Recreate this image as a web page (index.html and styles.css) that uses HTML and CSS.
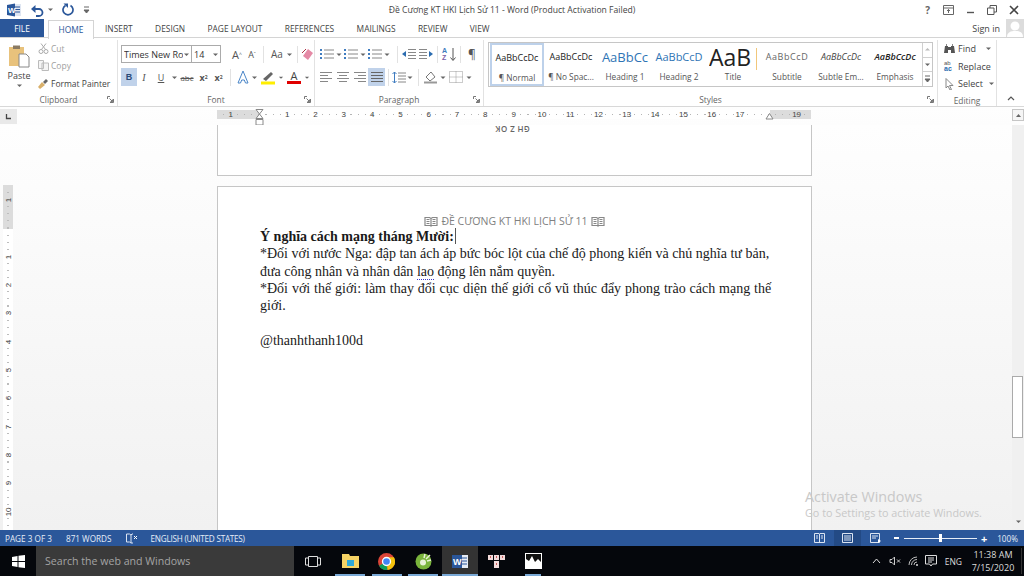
FILE: index.html
```html
<!DOCTYPE html>
<html lang="vi">
<head>
<meta charset="utf-8">
<title>Đề Cương KT HKI Lịch Sử 11 - Word</title>
<link rel="stylesheet" href="styles.css">
</head>
<body>
<svg class="defs" width="0" height="0">
  <symbol id="launch" viewBox="0 0 7 7"><path d="M.5 3V.5H3M6.5 3v3.500H3M2.500 2.500l3 3M5.500 3.500v2h-2" fill="none" stroke="#777"/></symbol>
  <symbol id="caret" viewBox="0 0 7 7"><path d="M1 2.500h5L3.500 5z" fill="#666"/></symbol>
  <symbol id="list" viewBox="0 0 14 12"><path d="M0 1h2v2H0zM0 5h2v2H0zM0 9h2v2H0z" fill="#3f7cc0"/><path d="M4 2h10M4 6h10M4 10h10" stroke="#888"/></symbol>
  <symbol id="left" viewBox="0 0 14 12"><path d="M1 1.500h12M1 4.500h8M1 7.500h12M1 10.500h8" stroke="#888"/></symbol>
  <symbol id="center" viewBox="0 0 14 12"><path d="M1 1.500h12M3 4.500h8M1 7.500h12M3 10.500h8" stroke="#888"/></symbol>
  <symbol id="right" viewBox="0 0 14 12"><path d="M1 1.500h12M5 4.500h8M1 7.500h12M5 10.500h8" stroke="#888"/></symbol>
  <symbol id="justify" viewBox="0 0 14 12"><path d="M1 1.500h12M1 4.500h12M1 7.500h12M1 10.500h12" stroke="#666"/></symbol>
  <symbol id="book" viewBox="0 0 14 11"><path d="M1 1.500h4.500L7 2.500l1.500-1H13v8H8L7 10 6 9.500H1zM7 2.500v7M2.500 3.500h3M2.500 5.500h3M2.500 7.500h3M8.500 3.500h3M8.500 5.500h3M8.500 7.500h3" fill="none" stroke="#888" stroke-width="1.200"/></symbol>
</svg>

<header class="titlebar">
  <div class="qat">
    <svg class="qword" width="14" height="14" viewBox="0 0 14 14"><rect x="5" y="1" width="9" height="12" fill="#dfe6f2"/><path d="M8 4h5M8 6.500h5M8 9h5" stroke="#2b579a"/><path d="M0 2l8-1.500v13L0 12z" fill="#2b579a"/><text x="1" y="9.500" class="qw">W</text></svg>
    <svg class="qundo" width="16" height="14" viewBox="0 0 16 14"><path d="M3 6h6a3.500 3.500 0 0 1 0 7H6" fill="none" stroke="#2b579a" stroke-width="1.800"/><path d="M1 6l4.500-4v8z" fill="#2b579a"/></svg>
    <svg class="qcaret" width="7" height="7"><use href="#caret"/></svg>
    <svg class="qredo" width="12" height="14" viewBox="0 0 12 14"><path d="M3.500 2.500a5 5 0 1 0 5 0" fill="none" stroke="#2b579a" stroke-width="1.700"/><path d="M1.500 0.500h4.500v4.500z" fill="#2b579a"/></svg>
    <svg class="qmore" width="7" height="8" viewBox="0 0 7 8"><path d="M1 1h5M1 4h5L3.500 7z" stroke="#666" fill="#666"/></svg>
  </div>
  <div class="doc-title">Đề Cương KT HKI Lịch Sử 11 - Word (Product Activation Failed)</div>
  <div class="winbtns">
    <span class="help">?</span>
    <svg width="11" height="10" viewBox="0 0 11 10"><path d="M.5.500h10v9H.5zM.5 3h10M5.500 8V4.500M4 6l1.500-1.500L7 6" fill="none" stroke="#666"/></svg>
    <svg width="9" height="10" viewBox="0 0 9 10"><path d="M1 7.500h7" stroke="#555" stroke-width="1.400"/></svg>
    <svg width="10" height="10" viewBox="0 0 10 10"><path d="M.5 3h6.500v6.500H.5zM3 3V.5h6.500V7H7" fill="none" stroke="#555"/></svg>
    <svg width="10" height="10" viewBox="0 0 10 10"><path d="M1 1l8 8M9 1l-8 8" stroke="#444" stroke-width="1.600"/></svg>
  </div>
</header>

<nav class="tabs">
  <span class="tab-file">FILE</span>
  <span class="tab-home">HOME</span>
  <span class="tab">INSERT</span>
  <span class="tab">DESIGN</span>
  <span class="tab">PAGE LAYOUT</span>
  <span class="tab">REFERENCES</span>
  <span class="tab">MAILINGS</span>
  <span class="tab">REVIEW</span>
  <span class="tab">VIEW</span>
  <span class="signin">Sign in</span>
  <span class="avatar"><svg width="18" height="18" viewBox="0 0 18 18"><rect width="18" height="18" fill="#dcdcdc"/><circle cx="9" cy="7" r="4.500" fill="#fff"/><path d="M1 18c0-5 4-6 8-6s8 1 8 6z" fill="#fff"/></svg></span>
</nav>

<section class="ribbon">
  <div class="group g-clip">
    <div class="clip-body">
      <div class="paste">
        <svg width="22" height="24" viewBox="0 0 22 24"><path d="M1 3h15v19H1z" fill="#e8c27c"/><path d="M5 1.500h7v3.500H5z" fill="#8a7a62"/><path d="M11 10h7l3 3v10H11z" fill="#fff" stroke="#888"/></svg>
        <span class="paste-label">Paste</span>
        <svg width="7" height="7"><use href="#caret"/></svg>
      </div>
      <div class="clip-list">
        <div class="clip-row muted"><svg width="11" height="11" viewBox="0 0 11 11"><circle cx="3" cy="8.500" r="2" fill="none" stroke="#aaa"/><circle cx="8" cy="8.500" r="2" fill="none" stroke="#aaa"/><path d="M3.500 6.500L8 .5M7.500 6.500L3 .5" stroke="#aaa"/></svg>Cut</div>
        <div class="clip-row muted"><svg width="11" height="11" viewBox="0 0 11 11"><path d="M.5.500h5v8h-5zM4 3h6.500v7.500H4z" fill="#f4f4f4" stroke="#bbb"/></svg>Copy</div>
        <div class="clip-row"><svg width="11" height="11" viewBox="0 0 11 11"><path d="M5 4l3-3 2 2-3 3z" fill="#666"/><path d="M0 9l4-5 3 3-5 4z" fill="#d9b06a"/></svg>Format Painter</div>
      </div>
    </div>
    <div class="glabel">Clipboard<svg class="launch" width="7" height="7"><use href="#launch"/></svg></div>
  </div>

  <div class="group g-font">
    <div class="rows">
      <div class="row row1">
        <span class="fontbox fname"><span class="fname-text">Times New Ro</span><svg width="7" height="7"><use href="#caret"/></svg></span>
        <span class="fontbox fsize">14<svg width="7" height="7"><use href="#caret"/></svg></span>
        <span class="b w16 growA">A<sup>^</sup></span>
        <span class="b w14 shrinkA">A<sup>ˇ</sup></span>
        <span class="vsep"></span>
        <span class="b w18 aa">Aa</span><svg class="w7" width="7" height="7"><use href="#caret"/></svg>
        <span class="vsep"></span>
        <svg class="eraser" width="13" height="13" viewBox="0 0 13 13"><path d="M7 1l5 4-5 7-5-4z" fill="#e58aa6"/><path d="M1 5l4-4" stroke="#a34" /></svg>
      </div>
      <div class="row row2">
        <span class="b w16 act bold">B</span>
        <span class="b w14 ital">I</span>
        <span class="b w20 under">U</span><svg class="w7" width="7" height="7"><use href="#caret"/></svg>
        <span class="b w18 strike">abc</span>
        <span class="b w15 sc">x<sub>2</sub></span>
        <span class="b w15 sc">x<sup>2</sup></span>
        <span class="vsep"></span>
        <svg class="w16" width="16" height="15" viewBox="0 0 16 15"><path d="M8 1l5 12h-2.500L9.300 10H6.700L5.500 13H3z" fill="#fff" stroke="#4a86c8"/></svg><svg class="w7" width="7" height="7"><use href="#caret"/></svg>
        <svg class="w20" width="20" height="15" viewBox="0 0 20 15"><path d="M5 9l8-7 2 2-7 7z" fill="#666"/><rect x="3" y="11.500" width="14" height="3" fill="#ffee00"/></svg><svg class="w6" width="6" height="7"><use href="#caret"/></svg>
        <span class="b w20 fontcolor">A</span><svg class="w6" width="6" height="7"><use href="#caret"/></svg>
      </div>
    </div>
    <div class="glabel">Font<svg class="launch" width="7" height="7"><use href="#launch"/></svg></div>
  </div>

  <div class="group g-para">
    <div class="rows para-rows">
      <div class="row para1">
        <svg width="14" height="12"><use href="#list"/></svg><svg class="w10" width="7" height="7"><use href="#caret"/></svg>
        <svg width="14" height="12"><use href="#list"/></svg><svg class="w10" width="7" height="7"><use href="#caret"/></svg>
        <svg width="14" height="12"><use href="#list"/></svg><svg class="w10" width="7" height="7"><use href="#caret"/></svg>
        <span class="vsep sep-a"></span>
        <svg width="14" height="12" viewBox="0 0 14 12"><path d="M6 1.500h8M6 4.500h8M6 7.500h8M6 10.500h8" stroke="#888"/><path d="M0 6l4-3v6z" fill="#2b6cb0"/></svg>
        <svg class="ml3" width="14" height="12" viewBox="0 0 14 12"><path d="M0 1.500h8M0 4.500h8M0 7.500h8M0 10.500h8" stroke="#888"/><path d="M14 6l-4-3v6z" fill="#2b6cb0"/></svg>
        <span class="vsep"></span>
        <span class="sort"><span class="az"><span>A</span><span class="zz">Z</span></span><svg width="6" height="15" viewBox="0 0 6 15"><path d="M3 1v12M.5 10.500L3 13.500l2.500-3" fill="none" stroke="#555"/></svg></span>
        <span class="vsep"></span>
        <span class="b w14 pil">¶</span>
      </div>
      <div class="row para2">
        <svg class="al" width="14" height="12"><use href="#left"/></svg>
        <svg class="al" width="14" height="12"><use href="#center"/></svg>
        <svg class="al" width="14" height="12"><use href="#right"/></svg>
        <span class="just"><svg width="14" height="12"><use href="#justify"/></svg></span>
        <span class="vsep sep-b"></span>
        <svg width="14" height="13" viewBox="0 0 14 13"><path d="M2.500 1v11M.5 3l2-2 2 2M.5 10l2 2 2-2" fill="none" stroke="#3f7cc0"/><path d="M6 2h8M6 5h8M6 8h8M6 11h8" stroke="#888"/></svg><svg class="w8" width="7" height="7"><use href="#caret"/></svg>
        <span class="vsep"></span>
        <svg class="w16" width="16" height="14" viewBox="0 0 16 14"><path d="M3 7l5-5 4 5-5 4z" fill="#fff" stroke="#777"/><path d="M1 12.500h13" stroke="#999" stroke-width="2"/></svg><svg class="w8" width="7" height="7"><use href="#caret"/></svg>
        <svg class="ml2" width="14" height="12" viewBox="0 0 14 12"><path d="M.5.500h13v11H.5zM7 .5v11M.5 6h13" fill="none" stroke="#999" stroke-dasharray="1 1"/></svg><svg class="ml2 w8" width="7" height="7"><use href="#caret"/></svg>
      </div>
    </div>
    <div class="glabel">Paragraph<svg class="launch" width="7" height="7"><use href="#launch"/></svg></div>
  </div>

  <div class="group g-styles">
    <div class="gallery">
      <div class="style selected"><span class="prev pv-body">AaBbCcDc</span><span class="sname">¶ Normal</span></div>
      <div class="style"><span class="prev pv-body">AaBbCcDc</span><span class="sname">¶ No Spac...</span></div>
      <div class="style"><span class="prev pv-h1">AaBbCc</span><span class="sname">Heading 1</span></div>
      <div class="style"><span class="prev pv-h2">AaBbCcD</span><span class="sname">Heading 2</span></div>
      <div class="style"><span class="prev pv-title">AaB|</span><span class="sname">Title</span></div>
      <div class="style"><span class="prev pv-sub">AaBbCcD</span><span class="sname">Subtitle</span></div>
      <div class="style"><span class="prev pv-em">AaBbCcDc</span><span class="sname">Subtle Em...</span></div>
      <div class="style"><span class="prev pv-emb">AaBbCcDc</span><span class="sname">Emphasis</span></div>
      <div class="gscroll">
        <span><svg width="7" height="7" viewBox="0 0 7 7"><path d="M1 4.500h5L3.500 2z" fill="#bbb"/></svg></span>
        <span><svg width="7" height="7"><use href="#caret"/></svg></span>
        <span><svg width="7" height="8" viewBox="0 0 7 8"><path d="M1 1h5M1 4h5L3.500 7z" stroke="#666" fill="#666"/></svg></span>
      </div>
    </div>
    <div class="glabel">Styles<svg class="launch" width="7" height="7"><use href="#launch"/></svg></div>
  </div>

  <div class="group g-edit">
    <div class="clip-list edit-list">
      <div class="clip-row"><svg width="11" height="11" viewBox="0 0 11 11"><path d="M1 3h3v7H0zM7 3h3l1 7H7zM4 4h3v3H4z" fill="#555"/><path d="M2 1h1v2H2zM8 1h1v2H8z" fill="#888"/></svg>Find<svg class="ml6" width="7" height="7"><use href="#caret"/></svg></div>
      <div class="clip-row"><span class="rp"><span>ab</span><span class="rp2">ac</span></span>Replace</div>
      <div class="clip-row"><svg width="11" height="12" viewBox="0 0 11 12"><path d="M2 .5l7 7H5.500l2 4-1.500.5-2-4L2 10z" fill="#fff" stroke="#888"/></svg>Select<svg class="ml2" width="7" height="7"><use href="#caret"/></svg></div>
    </div>
    <div class="glabel">Editing</div>
  </div>
  <div class="collapse"><svg width="8" height="6" viewBox="0 0 8 6"><path d="M1 5l3-3 3 3" fill="none" stroke="#555" stroke-width="1.200"/></svg></div>
</section>

<div class="ruler-row">
  <div class="tabstop"><svg width="7" height="7" viewBox="0 0 7 7"><path d="M1.500 1v4.500H6" fill="none" stroke="#444" stroke-width="1.300"/></svg></div>
  <div class="hruler">
    <span>1</span><span></span><span>1</span><span>2</span><span>3</span><span>4</span><span>5</span><span>6</span><span>7</span><span>8</span><span>9</span><span>10</span><span>11</span><span>12</span><span>13</span><span>14</span><span>15</span><span>16</span><span>17</span><span></span><span>19</span>
    <svg class="indent-l" width="9" height="17" viewBox="0 0 9 17"><path d="M1 .5h7L4.500 5zM4.500 5L8 9.500H1z" fill="#fff" stroke="#888"/><path d="M1 10.500h7v5.500H1z" fill="#fff" stroke="#888"/></svg>
    <svg class="indent-r" width="9" height="7" viewBox="0 0 9 7"><path d="M4.500 .5L8 6H1z" fill="#fff" stroke="#888"/></svg>
  </div>
  <div class="up-btn"><svg width="7" height="7" viewBox="0 0 7 7"><path d="M1 5h5L3.500 2z" fill="#666"/></svg></div>
</div>

<main class="docarea">
  <div class="vgutter">
    <div class="vruler">
      <span>1</span><span></span><span>1</span><span>2</span><span>3</span><span>4</span><span>5</span><span>6</span><span>7</span><span>8</span><span>9</span><span>10</span>
    </div>
  </div>
  <div class="pages">
    <div class="page-stub"><span class="flipped">GH Z OK</span></div>
    <article class="page">
      <div class="page-head"><svg width="14" height="11"><use href="#book"/></svg> ĐỀ CƯƠNG KT HKI LỊCH SỬ 11 <svg width="14" height="11"><use href="#book"/></svg></div>
      <div class="body-text">
        <p><strong>Ý nghĩa cách mạng tháng Mười:</strong><span class="cursor"></span></p>
        <p>*Đối với nước Nga: đập tan ách áp bức bóc lột của chế độ phong kiến và chủ nghĩa tư bản, đưa công nhân và nhân dân <span class="wavy">lao</span> động lên nắm quyền.</p>
        <p class="wide">*Đối với thế giới: làm thay đổi cục diện thế giới cổ vũ thúc đẩy phong trào cách mạng thế giới.</p>
        <p class="blank">&nbsp;</p>
        <p>@thanhthanh100d</p>
      </div>
    </article>
  </div>
  <div class="vscroll">
    <div class="thumb"></div>
    <svg class="down" width="7" height="7"><use href="#caret"/></svg>
  </div>
  <div class="activate">
    <div class="act1">Activate Windows</div>
    <div class="act2">Go to Settings to activate Windows.</div>
  </div>
</main>

<footer class="status">
  <span class="st st-page">PAGE 3 OF 3</span>
  <span class="st st-words">871 WORDS</span>
  <svg class="st-proof" width="12" height="11" viewBox="0 0 12 11"><path d="M.5 1h3l1.500 1v8l-1.500-1h-3zM5 2l1-1h1M5 10h2" fill="none" stroke="#dbe4f2"/><path d="M8 3l3 3M11 3L8 6" stroke="#fff"/></svg>
  <span class="st st-lang">ENGLISH (UNITED STATES)</span>
  <div class="st-right">
    <svg class="view" width="11" height="10" viewBox="0 0 11 10"><path d="M.5.500h4.500l.5.5.5-.5h4.500v9H.5zM5.500 1v8M2 3h2M2 5h2M7 3h2M7 5h2" fill="none" stroke="#dbe4f2"/></svg>
    <span class="view-active"><svg width="11" height="10" viewBox="0 0 11 10"><path d="M.5.500h10v9H.5zM2 3h7M2 5h7M2 7h7" fill="none" stroke="#dbe4f2"/></svg></span>
    <svg class="view" width="12" height="10" viewBox="0 0 12 10"><path d="M.5.500h9v9H.5zM2 3h6M2 5h4" fill="none" stroke="#dbe4f2"/><path d="M8 6l3 2-3 2z" fill="#fff"/></svg>
    <span class="zminus"></span>
    <span class="zslider"><span class="zthumb"></span></span>
    <span class="zplus">+</span>
    <span class="zpct">100%</span>
  </div>
</footer>

<div class="taskbar">
  <div class="start"><svg width="13" height="13" viewBox="0 0 13 13"><path d="M0 2l5.500-1v5H0zM6.500.8L13 0v6H6.500zM0 7h5.500v5L0 11zM6.500 7H13v6l-6.500-.8z" fill="#fff"/></svg></div>
  <div class="search">Search the web and Windows</div>
  <div class="taskview"><svg width="16" height="11" viewBox="0 0 16 11"><path d="M3.500.5h9v10h-9zM3.500 2H.5v7h3M12.500 2h3v7h-3" fill="none" stroke="#ddd"/></svg></div>
  <div class="apps">
    <span class="app run"><svg width="17" height="14" viewBox="0 0 17 14"><path d="M0 0h7l1 2h9v12H0z" fill="#f6d365"/><rect x="5" y="6" width="7" height="6" fill="#30a9d8"/></svg></span>
    <span class="app run"><svg width="17" height="17" viewBox="0 0 32 32"><circle cx="16" cy="16" r="16" fill="#db4437"/><path d="M16 16L2 24a16 16 0 0 0 16 8z" fill="#0f9d58"/><path d="M16 8h14a16 16 0 0 1-12 24z" fill="#f4c20d"/><circle cx="16" cy="16" r="7.500" fill="#4285f4" stroke="#fff" stroke-width="2.500"/></svg></span>
    <span class="app run"><svg width="17" height="17" viewBox="0 0 17 17"><circle cx="8.500" cy="8.500" r="8" fill="#7ab43c"/><circle cx="8" cy="9.500" r="3" fill="#e8f2d8"/><path d="M11 6l4-4M9 5l1-4M12 8l4-1" stroke="#e9f3d8" stroke-width="1.500"/></svg></span>
    <span class="app current"><svg width="16" height="15" viewBox="0 0 16 15"><rect x="8" y="1" width="8" height="13" fill="#e6ecf6"/><path d="M10 4h5M10 7h5M10 10h5" stroke="#2b579a"/><rect x="0" y="1" width="10" height="13" fill="#2b579a"/><text x="1" y="11" class="tw">W</text></svg></span>
    <span class="app"><svg width="17" height="15" viewBox="0 0 17 15"><path d="M0 1h5v5H0zM6 1h5v5H6zM12 1h5v5h-5zM6 7h5v7H6z" fill="#f2dada"/><path d="M2 3h1M8 3h1M14 3h1M8 10h1" stroke="#b33" stroke-width="1.500"/></svg></span>
    <span class="app run short"><svg width="17" height="16" viewBox="0 0 17 16"><rect width="17" height="16" fill="#fff"/><path d="M1 1h15v8l-3-3-3 3-3-6-3 5-3-2z" fill="#111"/></svg></span>
  </div>
  <div class="tray">
    <svg width="9" height="6" viewBox="0 0 9 6"><path d="M1 5l3.500-4L8 5" fill="none" stroke="#ddd"/></svg>
    <svg class="t-sp" width="12" height="10" viewBox="0 0 12 10"><path d="M1 3.500h2L5.500 1v8L3 6.500H1zM8 3.500l3 3M11 3.500l-3 3" fill="none" stroke="#ccc"/></svg>
    <svg class="t-wifi" width="11" height="10" viewBox="0 0 11 10"><path d="M1 9a8 8 0 0 1 8-8M3.500 9A5.500 5.500 0 0 1 9 3.500M6 9a3 3 0 0 1 3-3" fill="none" stroke="#bbb"/><circle cx="9" cy="9" r="1" fill="#ddd"/></svg>
    <svg class="t-msg" width="12" height="12" viewBox="0 0 12 12"><path d="M.5.500h11v8.500H7.500L6 11 4.500 9H.5zM3 3h6M3 5h6M3 7h4" fill="none" stroke="#ddd"/></svg>
    <span class="eng">ENG</span>
    <span class="clock"><span>11:38 AM</span><span>7/15/2020</span></span>
  </div>
</div>
</body>
</html>
```
FILE: styles.css
```css
* { box-sizing: border-box; }
html, body { margin: 0; height: 576px; width: 1024px; overflow: hidden; }
body { display: flex; flex-direction: column; background: #fff; font-family: "Open Sans", "Noto Sans", sans-serif; font-size: 8.5px; color: #444; }
.defs { position: absolute; }
svg { display: block; flex: none; }

/* title bar */
.titlebar { height: 19px; display: flex; align-items: center; position: relative; flex: none; }
.qat { display: flex; align-items: center; padding-left: 7px; }
.qundo { margin-left: 9px; }
.qcaret { margin-left: 1px; }
.qredo { margin-left: 8px; }
.qmore { margin-left: 9px; }
.qw { font: bold 8px "Liberation Sans", sans-serif; fill: #fff; }
.doc-title { position: absolute; left: 0; right: 0; text-align: center; color: #444; font-size: 8.6px; }
.winbtns { margin-left: auto; display: flex; align-items: center; gap: 12px; padding-right: 5px; }
.help { font-weight: 700; font-size: 10px; color: #666; margin-right: 1px; }

/* tabs */
.tabs { height: 19px; flex: none; display: flex; align-items: center; position: relative; font-size: 8.4px; border-bottom: 1px solid #d4d4d4; }
.tab-file { width: 44px; height: 18px; background: #2b579a; color: #fff; display: flex; align-items: center; justify-content: center; }
.tab-home { margin-left: 4px; width: 46px; height: 19px; background: #fff; color: #2b579a; display: flex; align-items: center; justify-content: center; border: 1px solid #d4d4d4; border-bottom: 0; position: relative; top: 1px; }
.tab { margin-left: 22.400px; color: #444; }
.tab-home + .tab { margin-left: 11px; }
.signin { margin-left: auto; font-size: 9px; }
.avatar { margin-left: 6px; height: 18px; }

/* ribbon */
.ribbon { height: 69px; flex: none; display: flex; border-bottom: 1px solid #d8d8d8; }
.group { display: flex; flex-direction: column; border-right: 1px solid #e2e2e2; margin: 2px 0 0; }
.glabel { height: 14px; flex: none; text-align: center; color: #666; font-size: 8.4px; line-height: 15px; position: relative; margin-top: auto; }
.launch { position: absolute; right: 3px; top: 4px; }
.g-clip { width: 118px; }
.g-font { width: 197px; }
.g-para { width: 169px; }
.g-styles { width: 454px; }
.g-edit { width: 59px; }
.clip-body { display: flex; flex: 1; min-height: 0; }
.paste { width: 38px; display: flex; flex-direction: column; align-items: center; padding-top: 4px; font-size: 9px; }
.paste-label { margin-top: 2px; line-height: 12px; }
.clip-list { display: flex; flex-direction: column; }
.clip-row { height: 17.500px; display: flex; align-items: center; gap: 2px; white-space: nowrap; }
.muted { color: #a0a0a0; }
.edit-list { padding-left: 6px; font-size: 9px; }
.edit-list .clip-row { gap: 3px; }
.rp { width: 11px; display: flex; flex-direction: column; font: 6px/5.500px "Liberation Sans", sans-serif; color: #555; }
.rp2 { font-weight: 700; color: #2b6cb0; font-size: 7px; }
.ml6 { margin-left: 6px; }
.ml3 { margin-left: 3px; }
.ml2 { margin-left: 2px; }
.collapse { flex: 1; display: flex; align-items: flex-end; justify-content: center; padding: 0 0 5px 0; }

.rows { flex: 1; min-height: 0; display: flex; flex-direction: column; padding: 5px 0 0 3px; gap: 5px; }
.row { display: flex; align-items: center; height: 18px; }
.b { display: flex; align-items: center; justify-content: center; height: 18px; flex: none; color: #555; }
.w6 { width: 6px; } .w7 { width: 7px; } .w8 { width: 8px; } .w9 { width: 9px; } .w10 { width: 10px; }
.w14 { width: 14px; } .w15 { width: 15px; } .w16 { width: 16px; } .w18 { width: 18px; } .w20 { width: 20px; }
.fontbox { height: 18px; display: flex; align-items: center; justify-content: space-between; border: 1px solid #ababab; background: #fff; padding: 0 1px 0 2px; color: #333; white-space: nowrap; }
.fname { width: 71px; font-size: 9px; }
.fname-text { overflow: hidden; }
.fsize { width: 32px; margin-left: -1px; font-size: 9px; }
.growA { margin-left: 8px; font-size: 11px; }
.shrinkA { font-size: 9px; }
.b sup, .b sub { font-size: 5px; line-height: 1; }
.aa { font-size: 10px; }
.vsep { width: 1px; height: 17px; background: #e2e2e2; margin: 0 4px; flex: none; }
.eraser { margin-left: -1px; }
.act { background: #c0d2ea; color: #2a4a78; }
.bold { font: bold 9px "Liberation Sans", sans-serif; }
.ital { font: italic 10px "Liberation Serif", serif; }
.under { font-size: 9px; text-decoration: underline; }
.strike { font-size: 8px; text-decoration: line-through; }
.sc { font-size: 9px; font-weight: 700; }
.fontcolor { font-size: 11px; color: #444; border-bottom: 3px solid #e00000; height: 13px; line-height: 11px; width: 14px; margin: 0 3px; }

.para-rows { padding-left: 5px; }
.sep-a { margin-left: 5px; }
.sep-b { margin: 0 3px; }
.sort { width: 14px; display: flex; align-items: center; justify-content: space-between; }
.az { display: flex; flex-direction: column; font: 700 7px/7px "Liberation Sans", sans-serif; color: #3f7cc0; }
.zz { color: #7b5ea7; }
.pil { font-size: 12px; color: #555; }
.para2 { margin-left: -3px; }
.al { margin: 0 1.500px; }
.just { width: 17px; height: 18px; background: #c0d2ea; display: flex; align-items: center; justify-content: center; }

.gallery { margin: 2px 0 0 4px; width: 445px; height: 45px; border: 1px solid #c6c6c6; display: flex; flex: none; padding-left: 1px; }
.style { width: 54px; display: flex; flex-direction: column; align-items: center; overflow: hidden; padding: 1px; flex: none; }
.selected { border: 2px solid #bdd1ea; padding: 0; }
.prev { height: 26px; line-height: 26px; white-space: nowrap; color: #222; font-size: 9px; width: 48px; overflow: hidden; text-align: center; flex: none; }
.sname { font-size: 8.300px; color: #555; white-space: nowrap; line-height: 14px; }
.pv-h1 { font-size: 13px; color: #2e74b5; }
.pv-h2 { font-size: 11px; color: #2e74b5; }
.pv-title { font-size: 23px; color: #222; }
.pv-sub { font-size: 9px; color: #666; letter-spacing: .6px; }
.pv-em { font-style: italic; color: #444; }
.pv-emb { font-style: italic; font-weight: 600; color: #222; }
.gscroll { margin-left: auto; width: 12px; display: flex; flex-direction: column; border-left: 1px solid #d0d0d0; }
.gscroll span { flex: 1; display: flex; align-items: center; justify-content: center; border-bottom: 1px solid #d0d0d0; }
.gscroll span:last-child { border-bottom: 0; }

/* rulers */
.ruler-row { height: 18px; flex: none; display: flex; background: linear-gradient(#fefefe, #fdfdfd); padding-top: 3px; position: relative; }
.tabstop { width: 17px; height: 15px; margin-top: -1px; background: #e9e9e9; display: flex; align-items: center; justify-content: center; }
.hruler { margin-left: 199.500px; width: 594.300px; height: 9px; display: flex; position: relative; font-family: "Liberation Sans", sans-serif; font-size: 8px; line-height: 9px; color: #444;
  background:
    repeating-linear-gradient(90deg, transparent 0 6px, #b5b5b5 6px 7.080px) 0 4px / 100% 1px no-repeat,
    linear-gradient(90deg, #dcdcdc 0 42.500px, #fff 42.500px 553px, #dcdcdc 553px); }
.hruler span { width: 28.300px; text-align: center; flex: none; }
.indent-l { position: absolute; left: 38px; top: -1px; }
.indent-r { position: absolute; left: 548px; top: 3px; }
.up-btn { margin-left: auto; width: 12px; height: 12px; margin-top: -1px; border: 1px solid #c6c6c6; background: #f5f5f5; display: flex; align-items: center; justify-content: center; }

/* document */
.docarea { height: 405px; flex: none; display: flex; position: relative; background: linear-gradient(#fefefe, #f1f1f1); overflow: hidden; }
.vgutter { width: 217px; flex: none; padding: 60px 0 0 3px; }
.vruler { width: 10px; height: 345px; display: flex; flex-direction: column; padding-top: 1px; font-family: "Liberation Sans", sans-serif; font-size: 8px; color: #444;
  background:
    repeating-linear-gradient(180deg, transparent 0 6px, #bdbdbd 6px 7.090px) 4px 1px / 2px 100% no-repeat,
    linear-gradient(#dcdcdc 0 44px, #fff 44px); }
.vruler span { height: 28.350px; flex: none; display: flex; align-items: center; justify-content: center; writing-mode: vertical-rl; transform: rotate(180deg); }
.pages { width: 595px; flex: none; display: flex; flex-direction: column; }
.page-stub { height: 51px; flex: none; background: #fff; border: 1px solid #c6c6c6; border-top: 0; display: flex; justify-content: center; }
.flipped { transform: rotate(180deg); font-size: 8px; font-weight: 600; color: #666; height: 10px; line-height: 10px; margin: -1px 0 0 -4px; letter-spacing: .4px; }
.page { margin-top: 10px; flex: 1; background: #fff; border: 1px solid #c6c6c6; border-bottom: 0; padding: 27px 0 0 42px; }
.page-head { margin-left: -42px; height: 14px; display: flex; align-items: center; justify-content: center; gap: 3px; font-size: 10.500px; color: #808080; }
.body-text { width: 512px; font-family: "Liberation Serif", serif; font-size: 14px; line-height: 17.300px; color: #1a1a1a; }
.body-text p { margin: 0; }
.wide { word-spacing: .38px; }
.cursor { display: inline-block; width: 1px; height: 16px; background: #555; vertical-align: -3px; margin-left: 1px; }
.wavy { border-bottom: 1px dotted #3a3ac8; }
.vscroll { position: relative; width: 12px; margin-left: auto; background: #f0f0f0; flex: none; }
.thumb { margin-top: 251px; height: 62px; width: 11px; background: #fff; border: 1px solid #aaa; }
.down { position: absolute; bottom: 5px; left: 3px; }
.activate { position: absolute; left: 805px; top: 363px; color: #c8c8c8; }
.act1 { font-size: 14.300px; line-height: 17px; }
.act2 { font-size: 10.800px; line-height: 15px; white-space: nowrap; }

/* status */
.status { height: 16px; flex: none; display: flex; align-items: center; background: #2b579a; color: #e6edf7; font-size: 8.200px; padding-left: 5px; }
.st-words { margin-left: 14px; }
.st-proof { margin-left: 14px; }
.st-lang { margin-left: 13px; letter-spacing: -.25px; }
.st-right { margin-left: auto; display: flex; align-items: center; height: 16px; }
.view-active { width: 27px; height: 16px; margin: 0 9px; background: #234a85; display: flex; align-items: center; justify-content: center; }
.zminus { width: 5px; height: 2px; background: #fff; margin-left: 12px; }
.zslider { width: 73px; height: 1px; background: #e6edf7; margin-left: 5px; display: flex; justify-content: center; align-items: center; }
.zthumb { width: 3px; height: 8px; background: #fff; flex: none; }
.zplus { font-size: 11px; font-weight: 700; color: #fff; margin-left: 4px; }
.zpct { margin: 0 6px 0 10px; }

/* taskbar */
.taskbar { height: 30px; flex: none; display: flex; align-items: center; background: #05070c; color: #ddd; }
.start { width: 36px; display: flex; justify-content: center; }
.search { width: 258px; height: 30px; background: #3a3a3a; color: #a4a4a4; font-size: 10.600px; line-height: 30px; padding-left: 9px; }
.taskview { width: 38px; display: flex; justify-content: center; padding-right: 1px; }
.apps { display: flex; height: 30px; }
.app { width: 36.600px; height: 30px; display: flex; align-items: center; justify-content: center; }
.run { background: linear-gradient(#7aa9d6, #7aa9d6) center bottom / 30px 2px no-repeat; }
.short { background-size: 16px 2px; }
.current { background: linear-gradient(#7aa9d6, #7aa9d6) center bottom / 100% 2px no-repeat, #333; }
.tw { font: bold 9px "Liberation Sans", sans-serif; fill: #fff; }
.tray { margin-left: auto; display: flex; align-items: center; padding-right: 2px; }
.t-sp { margin-left: 8px; }
.t-wifi { margin-left: 7px; }
.t-msg { margin-left: 6px; }
.eng { margin-left: 8px; font-size: 8.500px; }
.clock { width: 52px; margin-left: 8px; padding-right: 5px; display: flex; flex-direction: column; align-items: center; font-size: 9px; line-height: 13px; border-right: 1px solid #333; }
```
